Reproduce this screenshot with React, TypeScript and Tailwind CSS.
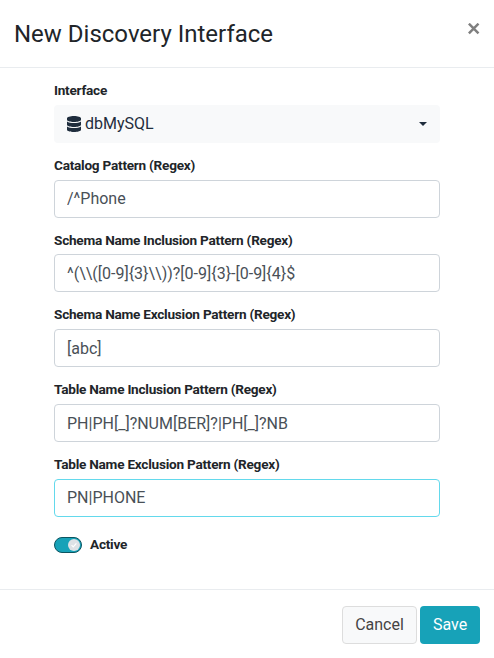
import { FaDatabase } from "react-icons/fa";

const fields = [
  { label: "Catalog Pattern (Regex)", value: "/^Phone", focused: false },
  { label: "Schema Name Inclusion Pattern (Regex)", value: "^(\\\\([0-9]{3}\\\\))?[0-9]{3}-[0-9]{4}$", focused: false },
  { label: "Schema Name Exclusion Pattern (Regex)", value: "[abc]", focused: false },
  { label: "Table Name Inclusion Pattern (Regex)", value: "PH|PH[_]?NUM[BER]?|PH[_]?NB", focused: false },
  { label: "Table Name Exclusion Pattern (Regex)", value: "PN|PHONE", focused: true },
];

const labelClass = "block h-[19.5px] text-[13.6px] font-bold leading-[19.5px] tracking-[-0.24px] text-[#212529]";

export default function App() {
  return (
    <div className="flex h-[658px] w-[494px] flex-col bg-white font-['Roboto',sans-serif] text-base text-[#212529]">
      <header className="flex h-[68px] shrink-0 items-center justify-between border-b border-[#e9ecef] pr-[14px] pl-[14px]">
        <h1 className="text-2xl leading-9 font-normal">New Discovery Interface</h1>
        <button aria-label="Close" className="mb-[10px] flex h-3 w-[13px] items-center justify-center">
          <svg width="13" height="12" viewBox="0 0 13 12" stroke="#7f7f7f" strokeWidth="2.5" fill="none">
            <path d="M1.9 .7 11.5 10.3M11.5 .7 1.9 10.3" />
          </svg>
        </button>
      </header>

      <main className="flex h-[521px] shrink-0 flex-col gap-[13px] px-[54px] pt-[13.05px]">
        <div className="flex w-[386px] flex-col gap-[4.3px]">
          <span className={labelClass}>Interface</span>
          <button className="flex h-[38px] items-center rounded bg-[#f8f9fa] pr-[13px] pl-[13px] text-[#1f2d3d]">
            <FaDatabase className="mr-1 h-4 w-[14px]" />
            <span>dbMySQL</span>
            <svg className="ml-auto" width="8" height="4" viewBox="0 0 8 4" fill="#1f2d3d">
              <path d="M0 0h8L4 4z" />
            </svg>
          </button>
        </div>
        {fields.map((f) => (
          <label key={f.label} className="flex w-[386px] flex-col gap-[4.3px]">
            <span className={labelClass}>{f.label}</span>
            <input
              type="text"
              defaultValue={f.value}
              className={`h-[38px] rounded border bg-white px-3 text-base text-[#495057] outline-none ${f.focused ? "border-[#63d9ec]" : "border-[#ced4da]"}`}
            />
          </label>
        ))}
        <label className="mt-[5.2px] flex items-center gap-2">
          <span className="flex h-4 w-7 items-center justify-end rounded-full border border-[#0c5460] bg-[#17a2b8] pr-px">
            <span className="flex size-3 items-center justify-center rounded-full bg-[#dee2e6]">
              <svg width="6" height="6" viewBox="0 0 6 6" fill="none" stroke="#fff" strokeWidth="1.2">
                <path d="M.6 3.2 2.2 4.8 5.4 1.3" />
              </svg>
            </span>
          </span>
          <span className={labelClass}>Active</span>
        </label>
      </main>

      <footer className="flex flex-1 items-start justify-end gap-[3px] border-t border-[#e9ecef] pt-4 pr-[14px]">
        <button className="h-[38px] w-[75px] rounded border border-[#ddd] bg-[#f8f9fa] text-[#444]">Cancel</button>
        <button className="h-[38px] w-[60px] rounded bg-[#17a2b8] text-white">Save</button>
      </footer>
    </div>
  );
}
